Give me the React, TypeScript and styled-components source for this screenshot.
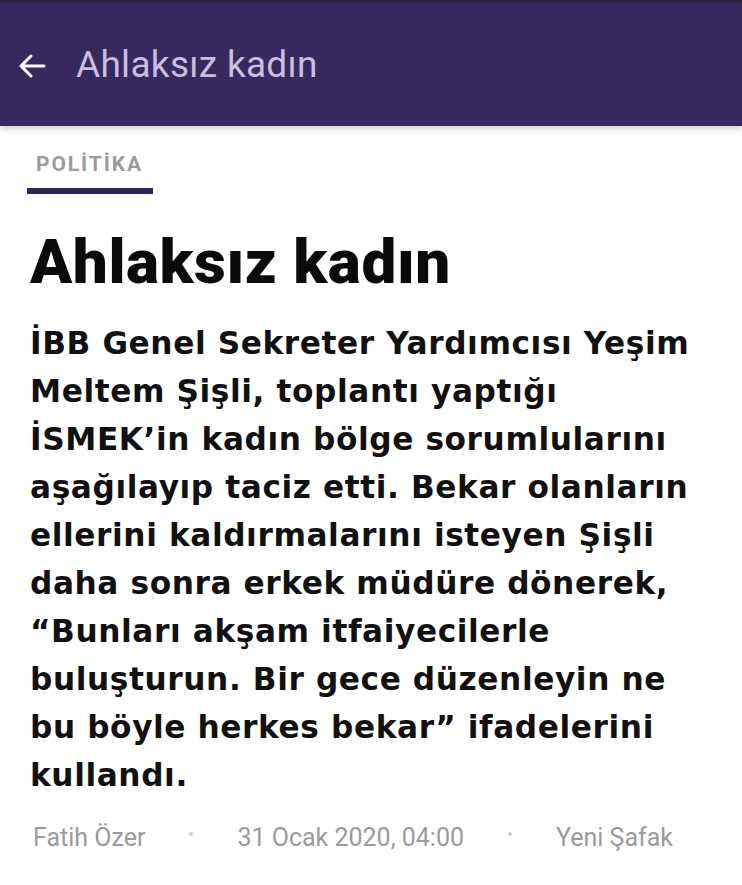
import styled, { createGlobalStyle } from "styled-components";

const GlobalStyle = createGlobalStyle`
  html, body {
    margin: 0;
    padding: 0;
    background: #ffffff;
  }
  body {
    font-family: Roboto, "Noto Sans", "Liberation Sans", sans-serif;
  }
`;

const Page = styled.div`
  width: 742px;
  min-height: 885px;
  background: #fff;
  overflow: hidden;
`;

const TopBar = styled.header`
  height: 123px;
  background: #37295e;
  border-top: 3px solid #2c2545;
  box-shadow: 0 3px 6px rgba(0, 0, 0, 0.18);
  display: flex;
  align-items: center;
  padding: 0 18px;
  gap: 30px;
`;

const BackButton = styled.button`
  border: none;
  background: none;
  padding: 0;
  width: 28px;
  height: 28px;
  display: flex;
  align-items: center;
  justify-content: center;
  cursor: pointer;
  margin-top: 2px;
`;

const BarTitle = styled.h1`
  margin: 0;
  font-family: Roboto, "Liberation Sans", sans-serif;
  font-weight: 400;
  font-size: 37px;
  color: #c8bfe0;
  letter-spacing: 0.3px;
`;

const Article = styled.article`
  padding: 27px 30px 0 30px;
`;

const Category = styled.div`
  display: inline-flex;
  flex-direction: column;
  margin-left: -3px;
`;

const CategoryLabel = styled.span`
  font-family: Roboto, "Liberation Sans", sans-serif;
  font-weight: 700;
  font-size: 21px;
  color: #9a9a9a;
  letter-spacing: 1.9px;
  padding: 0 10px 0 9px;
  line-height: 22px;
`;

const CategoryBar = styled.span`
  display: block;
  height: 6px;
  margin-top: 13px;
  background: #2f2558;
`;

const Headline = styled.h2`
  margin: 33px 0 0 0;
  font-family: Roboto, "Liberation Sans", sans-serif;
  font-weight: 900;
  font-size: 62px;
  line-height: 70px;
  letter-spacing: 0.6px;
  color: #0a0a0a;
`;

const Summary = styled.p`
  margin: 22px 0 0 0;
  font-family: "DejaVu Sans", "Liberation Sans", sans-serif;
  font-weight: 700;
  font-size: 31.2px;
  line-height: 48px;
  letter-spacing: 0.6px;
  color: #111;
  white-space: nowrap;
`;

const Meta = styled.div`
  display: flex;
  align-items: center;
  margin-top: 24px;
  font-family: Roboto, "Liberation Sans", sans-serif;
  font-size: 25px;
  line-height: 30px;
  color: #9b9b9b;
  gap: 44px;
  padding-left: 3px;
`;

const Dot = styled.span`
  width: 4px;
  height: 4px;
  border-radius: 50%;
  background: #cfcfcf;
  margin-top: -8px;
`;

const summaryLines = [
  "İBB Genel Sekreter Yardımcısı Yeşim",
  "Meltem Şişli, toplantı yaptığı",
  "İSMEK’in kadın bölge sorumlularını",
  "aşağılayıp taciz etti. Bekar olanların",
  "ellerini kaldırmalarını isteyen Şişli",
  "daha sonra erkek müdüre dönerek,",
  "“Bunları akşam itfaiyecilerle",
  "buluşturun. Bir gece düzenleyin ne",
  "bu böyle herkes bekar” ifadelerini",
  "kullandı.",
];

export default function App() {
  return (
    <Page>
      <GlobalStyle />
      <TopBar>
        <BackButton aria-label="Geri">
          <svg width="28" height="26" viewBox="0 0 28 26" fill="none">
            <path
              d="M26 13H3M13 3L3 13l10 10"
              stroke="#ffffff"
              strokeWidth="3"
              strokeLinecap="round"
              strokeLinejoin="round"
            />
          </svg>
        </BackButton>
        <BarTitle>Ahlaksız kadın</BarTitle>
      </TopBar>
      <Article>
        <Category>
          <CategoryLabel>POLİTİKA</CategoryLabel>
          <CategoryBar />
        </Category>
        <Headline>Ahlaksız kadın</Headline>
        <Summary>
          {summaryLines.map((line, i) => (
            <span key={i}>
              {line}
              {i < summaryLines.length - 1 && <br />}
            </span>
          ))}
        </Summary>
        <Meta>
          <span>Fatih Özer</span>
          <Dot />
          <span>31 Ocak 2020, 04:00</span>
          <Dot />
          <span>Yeni Şafak</span>
        </Meta>
      </Article>
    </Page>
  );
}
